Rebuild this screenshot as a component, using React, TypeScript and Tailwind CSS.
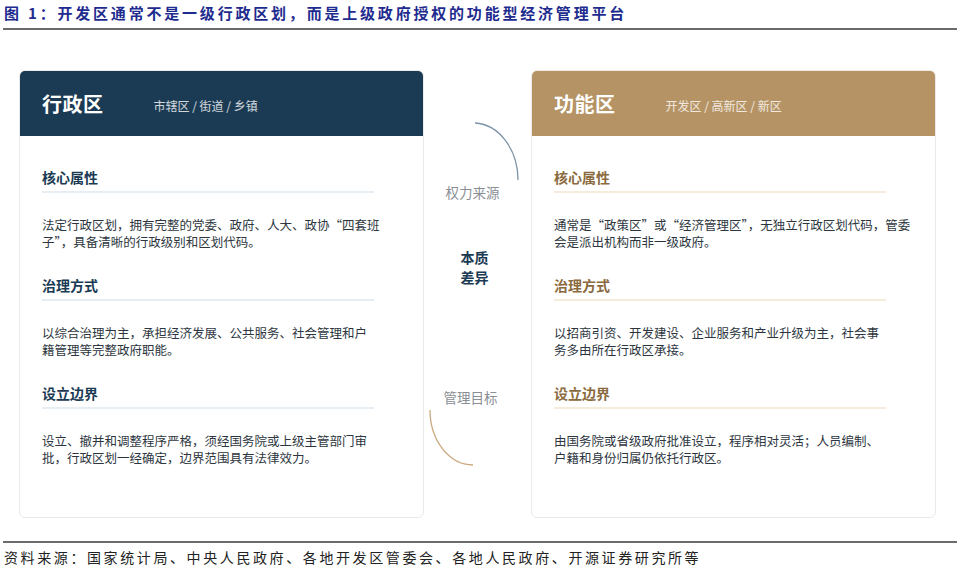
import React from "react";

const F = { fontFamily: '"Noto Sans CJK SC", "Noto Sans", sans-serif' };

type Sec = { t: string; l: string[] };

function Card({ title, sub, head, accent, line, secs }: { title: string; sub: string; head: string; accent: string; line: string; secs: Sec[] }) {
  return (
    <div className="w-[405px] h-[448px] bg-white rounded-[6px] border border-[#ebeae8] flex flex-col overflow-hidden">
      <div className={`h-[65px] ${head} flex items-center px-[22px] shrink-0`}>
        <div className="text-white text-[20px] font-bold tracking-[0.5px]">{title}</div>
        <div className="ml-[50px] mt-[4px] text-[12px] text-white/80">{sub}</div>
      </div>
      <div className="px-[22px] pt-[31px] flex flex-col">
        {secs.map((s, i) => (
          <div key={i} className="flex flex-col h-[108px]">
            <div className={`text-[14px] font-bold leading-[20px] ${accent}`}>{s.t}</div>
            <div className={`mt-[4px] h-[2px] w-[332px] ${line}`} />
            <div className="mt-[23px] text-[12.5px] leading-[17px] text-[#2d3640]">
              {s.l.map((x, j) => (
                <div key={j}>{x}</div>
              ))}
            </div>
          </div>
        ))}
      </div>
    </div>
  );
}

export default function App() {
  return (
    <div style={F} className="w-[960px] h-[573px] bg-white relative flex flex-col">
      <div className="px-[4px] pt-[2px] text-[15px] font-bold text-[#1f2c8f] leading-[22px] tracking-[2.8px] whitespace-nowrap">
        图 1：开发区通常不是一级行政区划，而是上级政府授权的功能型经济管理平台
      </div>
      <div className="mx-[3px] mt-[4px] h-[2px] bg-[#6b6b6b]" />
      <div className="flex mt-[40px] pl-[19px]">
        <Card
          title="行政区"
          sub="市辖区 / 街道 / 乡镇"
          head="bg-[#1b3a53]"
          accent="text-[#1b3a53]"
          line="bg-[#e6edf3]"
          secs={[
            { t: "核心属性", l: ["法定行政区划，拥有完整的党委、政府、人大、政协“四套班", "子”，具备清晰的行政级别和区划代码。"] },
            { t: "治理方式", l: ["以综合治理为主，承担经济发展、公共服务、社会管理和户", "籍管理等完整政府职能。"] },
            { t: "设立边界", l: ["设立、撤并和调整程序严格，须经国务院或上级主管部门审", "批，行政区划一经确定，边界范围具有法律效力。"] },
          ]}
        />
        <div className="w-[107px] relative flex flex-col items-center shrink-0">
          <svg className="absolute left-0 top-[-70px]" width="107" height="573" viewBox="0 0 107 573" fill="none">
            <path d="M51 123 A45 57 0 0 1 94 180" stroke="#7d93a8" strokeWidth="1.3" />
            <path d="M6 410 A43 55 0 0 0 49 465" stroke="#c9a97e" strokeWidth="1.3" />
          </svg>
          <div className="mt-[113px] mr-[10px] text-[13.5px] leading-[18px] text-[#8a8f96]">权力来源</div>
          <div className="mt-[46px] mr-[6px] text-[14px] font-bold leading-[20px] text-[#1b3a53] text-center">本质<br />差异</div>
          <div className="mt-[101px] mr-[14px] text-[13.5px] leading-[18px] text-[#8a8f96]">管理目标</div>
        </div>
        <Card
          title="功能区"
          sub="开发区 / 高新区 / 新区"
          head="bg-[#b59364]"
          accent="text-[#8a6a3e]"
          line="bg-[#f6ecdc]"
          secs={[
            { t: "核心属性", l: ["通常是“政策区”或“经济管理区”，无独立行政区划代码，管委", "会是派出机构而非一级政府。"] },
            { t: "治理方式", l: ["以招商引资、开发建设、企业服务和产业升级为主，社会事", "务多由所在行政区承接。"] },
            { t: "设立边界", l: ["由国务院或省级政府批准设立，程序相对灵活；人员编制、", "户籍和身份归属仍依托行政区。"] },
          ]}
        />
      </div>
      <div className="mx-[3px] mt-[23px] h-[2px] bg-[#6b6b6b]" />
      <div className="px-[4px] mt-[5px] text-[14px] leading-[18px] text-[#222] tracking-[2.6px] whitespace-nowrap">
        资料来源：国家统计局、中央人民政府、各地开发区管委会、各地人民政府、开源证券研究所等
      </div>
    </div>
  );
}
